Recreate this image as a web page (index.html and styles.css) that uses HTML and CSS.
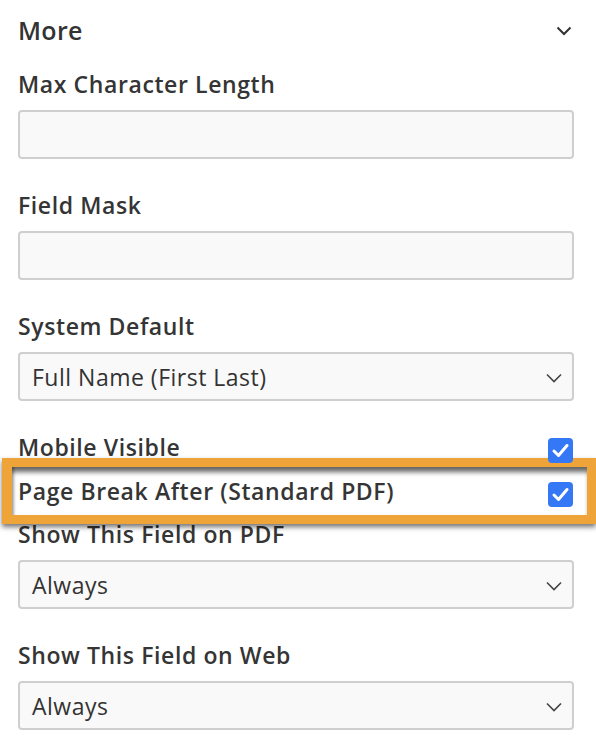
FILE: index.html
```html
<!DOCTYPE html>
<html>
<head>
<meta charset="utf-8">
<link rel="stylesheet" href="styles.css">
</head>
<body>
<div class="panel">
  <div class="header">
    <span class="title">More</span>
    <svg class="chev-head" width="16" height="10" viewBox="0 0 16 10"><path d="M1.5 1.5 L8 8 L14.5 1.5" fill="none" stroke="#333" stroke-width="2"/></svg>
  </div>

  <div class="field">
    <div class="label">Max Character Length</div>
    <div class="input"></div>
  </div>

  <div class="field">
    <div class="label">Field Mask</div>
    <div class="input"></div>
  </div>

  <div class="field">
    <div class="label">System Default</div>
    <div class="input select"><span>Full Name (First Last)</span>
      <svg class="chev" width="16" height="10" viewBox="0 0 16 10"><path d="M1 1.5 L8 8.5 L15 1.5" fill="none" stroke="#444" stroke-width="1.6"/></svg>
    </div>
  </div>

  <div class="check-row">
    <span class="label">Mobile Visible</span>
    <span class="checkbox"><svg width="25" height="25" viewBox="0 0 25 25"><path d="M6 13 L10.5 17.5 L19 7.5" fill="none" stroke="#fff" stroke-width="3" stroke-linecap="round" stroke-linejoin="round"/></svg></span>
  </div>

  <div class="check-row highlighted">
    <div class="highlight"></div>
    <span class="label">Page Break After (Standard PDF)</span>
    <span class="checkbox"><svg width="25" height="25" viewBox="0 0 25 25"><path d="M6 13 L10.5 17.5 L19 7.5" fill="none" stroke="#fff" stroke-width="3" stroke-linecap="round" stroke-linejoin="round"/></svg></span>
  </div>

  <div class="field after-check">
    <div class="label">Show This Field on PDF</div>
    <div class="input select"><span>Always</span>
      <svg class="chev" width="16" height="10" viewBox="0 0 16 10"><path d="M1 1.5 L8 8.5 L15 1.5" fill="none" stroke="#444" stroke-width="1.6"/></svg>
    </div>
  </div>

  <div class="field">
    <div class="label">Show This Field on Web</div>
    <div class="input select"><span>Always</span>
      <svg class="chev" width="16" height="10" viewBox="0 0 16 10"><path d="M1 1.5 L8 8.5 L15 1.5" fill="none" stroke="#444" stroke-width="1.6"/></svg>
    </div>
  </div>
</div>
</body>
</html>
```

FILE: styles.css
```css
html, body {
  margin: 0;
  padding: 0;
  background: #ffffff;
}
body {
  font-family: "Open Sans", "Lato", sans-serif;
  color: #333333;
  width: 596px;
  height: 756px;
  overflow: hidden;
}
.panel {
  padding: 16px 22px 0 18px;
}
.header {
  display: flex;
  align-items: center;
  justify-content: space-between;
  height: 28px;
  margin-bottom: 26px;
}
.title {
  font-size: 25px;
  font-weight: 600;
  line-height: 28px;
  color: #333;
  letter-spacing: 0.3px;
}
.chev-head {
  margin-right: 2px;
  margin-top: 2px;
}
.field {
  margin-bottom: 32px;
}
.label {
  font-size: 23px;
  font-weight: 600;
  line-height: 28px;
  color: #353535;
  letter-spacing: 0.6px;
}
.field .label {
  margin-bottom: 12px;
}
.input {
  height: 45px;
  border: 2px solid #cfcfcf;
  border-radius: 4px;
  background: #f9f9f9;
}
.select {
  display: flex;
  align-items: center;
  justify-content: space-between;
  padding: 0 10px 0 12px;
  font-size: 23px;
  color: #333;
  letter-spacing: 0.5px;
}
.chev {
  margin-top: 2px;
}
.check-row {
  position: relative;
  display: flex;
  align-items: center;
  justify-content: space-between;
  height: 28px;
  margin-bottom: 16px;
}
.check-row.highlighted {
  margin-bottom: 15px;
}
.check-row .label,
.check-row .checkbox {
  position: relative;
  z-index: 2;
}
.checkbox {
  width: 25px;
  height: 25px;
  border-radius: 4px;
  background: #3478f6;
  margin-top: 6px;
  margin-right: 1px;
  display: flex;
}
.highlight {
  position: absolute;
  z-index: 1;
  left: -16px;
  right: -22px;
  top: -19px;
  bottom: -19px;
  border: 9px solid #efa43a;
  border-left-width: 10px;
  background: #ffffff;
  box-shadow: 0 3px 5px rgba(0, 0, 0, 0.55), inset 0 7px 5px -2px rgba(0, 0, 0, 0.6), inset 4px 0 3px -2px rgba(0, 0, 0, 0.3);
}
.after-check .label {
  margin-bottom: 12px;
}
```
